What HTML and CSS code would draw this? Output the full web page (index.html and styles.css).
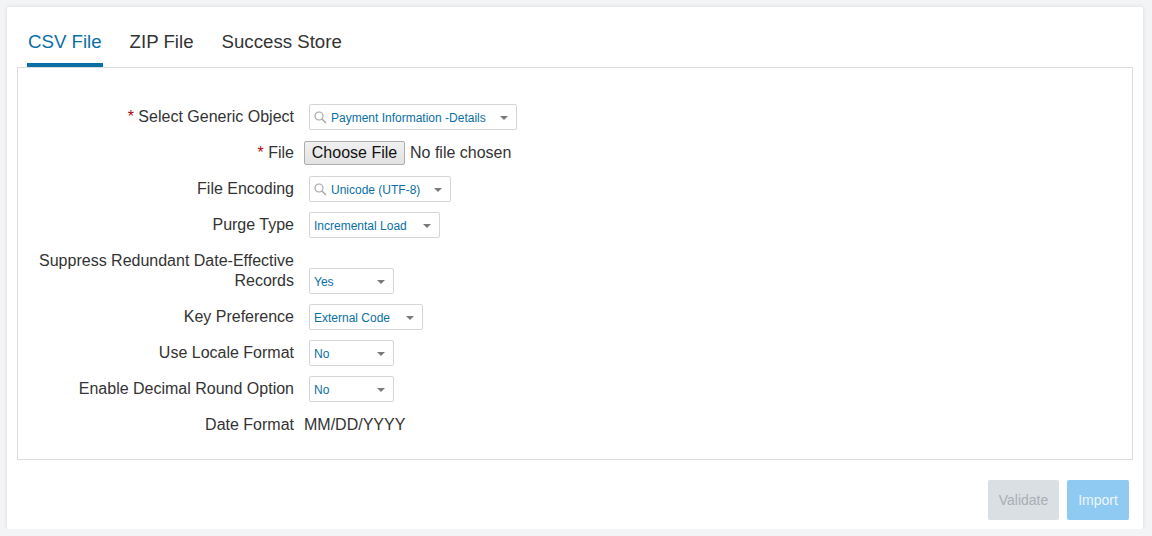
FILE: index.html
```html
<!DOCTYPE html>
<html lang="en">
<head>
    <meta charset="UTF-8">
    <meta name="viewport" content="width=device-width, initial-scale=1.0">
    <title>Import Data</title>
    <link rel="stylesheet" href="styles.css">
</head>
<body>
    <div class="card">
        <nav class="tabs">
            <a class="tab active" href="#csv">CSV File</a>
            <a class="tab" href="#zip">ZIP File</a>
            <a class="tab" href="#store">Success Store</a>
        </nav>

        <section class="panel" id="csv">
            <div class="row">
                <label class="label"><span class="req">*</span> Select Generic Object</label>
                <div class="select search" style="width: 208px;">
                    <svg class="icon" width="13" height="13" viewBox="0 0 13 13"><circle cx="5" cy="5" r="4" fill="none" stroke="#a6a6a6" stroke-width="1.2"/><path d="M8 8 L12 12" stroke="#a6a6a6" stroke-width="1.4"/></svg>
                    <span class="value">Payment Information -Details</span>
                    <span class="caret"></span>
                </div>
            </div>
            <div class="row">
                <label class="label"><span class="req">*</span> File</label>
                <div class="file">
                    <button class="file-btn">Choose File</button>
                    <span class="file-text">No file chosen</span>
                </div>
            </div>
            <div class="row">
                <label class="label">File Encoding</label>
                <div class="select search" style="width: 142px;">
                    <svg class="icon" width="13" height="13" viewBox="0 0 13 13"><circle cx="5" cy="5" r="4" fill="none" stroke="#a6a6a6" stroke-width="1.2"/><path d="M8 8 L12 12" stroke="#a6a6a6" stroke-width="1.4"/></svg>
                    <span class="value">Unicode (UTF-8)</span>
                    <span class="caret"></span>
                </div>
            </div>
            <div class="row">
                <label class="label">Purge Type</label>
                <div class="select" style="width: 131px;">
                    <span class="value">Incremental Load</span>
                    <span class="caret"></span>
                </div>
            </div>
            <div class="row">
                <label class="label">Suppress Redundant Date-Effective Records</label>
                <div class="select" style="width: 85px;">
                    <span class="value">Yes</span>
                    <span class="caret"></span>
                </div>
            </div>
            <div class="row">
                <label class="label">Key Preference</label>
                <div class="select" style="width: 114px;">
                    <span class="value">External Code</span>
                    <span class="caret"></span>
                </div>
            </div>
            <div class="row">
                <label class="label">Use Locale Format</label>
                <div class="select" style="width: 85px;">
                    <span class="value">No</span>
                    <span class="caret"></span>
                </div>
            </div>
            <div class="row">
                <label class="label">Enable Decimal Round Option</label>
                <div class="select" style="width: 85px;">
                    <span class="value">No</span>
                    <span class="caret"></span>
                </div>
            </div>
            <div class="row">
                <label class="label">Date Format</label>
                <span class="plain">MM/DD/YYYY</span>
            </div>
        </section>

        <div class="actions">
            <button class="btn btn-validate" disabled>Validate</button>
            <button class="btn btn-import" disabled>Import</button>
        </div>
    </div>
</body>
</html>
```

FILE: styles.css
```css
:root {
    --blue: #0a6fa5;
    --text: #333;
    --border: #d6d6d6;
}

body {
    font-family: 'Liberation Sans', Arial, sans-serif;
    margin: 0;
    padding: 7px 9px 0 7px;
    background: #f3f4f5;
    color: var(--text);
}

.card {
    background: #fff;
    border-radius: 2px;
    box-shadow: 0 0 4px rgba(0, 0, 0, 0.12);
    padding: 23px 10px 9px 10px;
}

.tabs {
    display: flex;
    gap: 26px;
    padding-left: 10px;
}

.tab {
    font-size: 18.67px;
    line-height: 24px;
    color: var(--text);
    text-decoration: none;
    padding: 0 1px 9px 1px;
    border-bottom: 4px solid transparent;
}

.tab.active {
    color: var(--blue);
    border-bottom-color: var(--blue);
}

.panel {
    border: 1px solid #dcdcdc;
    padding: 36px 0 21px 0;
    display: flex;
    flex-direction: column;
    gap: 10px;
}

.row {
    display: flex;
    align-items: flex-end;
    min-height: 26px;
}

.label {
    width: 276px;
    flex-shrink: 0;
    text-align: right;
    font-size: 16px;
    line-height: 20px;
    padding: 3px 0;
    margin-right: 10px;
}

.req {
    color: #b0060f;
}

.select {
    margin-left: 5px;
    height: 26px;
    box-sizing: border-box;
    border: 1px solid var(--border);
    border-radius: 2px;
    display: flex;
    align-items: center;
    padding: 1px 8px 0 4px;
    font-size: 12px;
    color: var(--blue);
}

.icon {
    margin-right: 4px;
    flex-shrink: 0;
}

.value {
    flex: 1;
    white-space: nowrap;
}

.caret {
    width: 0;
    height: 0;
    border-left: 4px solid transparent;
    border-right: 4px solid transparent;
    border-top: 4px solid #7a7a7a;
}

.file {
    display: flex;
    align-items: center;
    height: 26px;
}

.file-btn {
    font-family: 'Liberation Sans', Arial, sans-serif;
    font-size: 16px;
    color: #111;
    height: 24px;
    width: 101px;
    padding: 0;
    border: 1px solid #adadad;
    border-radius: 2px;
    background: linear-gradient(#f0f0f0, #e2e2e2);
}

.file-text {
    font-size: 16px;
    margin-left: 5px;
}

.plain {
    font-size: 16px;
    line-height: 20px;
    padding: 3px 0;
}

.actions {
    display: flex;
    justify-content: flex-end;
    gap: 8px;
    margin-top: 20px;
    padding-right: 4px;
}

.btn {
    font-family: 'Liberation Sans', Arial, sans-serif;
    font-size: 14px;
    height: 40px;
    border: none;
    border-radius: 2px;
}

.btn-validate {
    width: 71px;
    background: #d9dfe3;
    color: #a9afb4;
}

.btn-import {
    width: 62px;
    background: #8fcaf2;
    color: #eef6fc;
}
```
